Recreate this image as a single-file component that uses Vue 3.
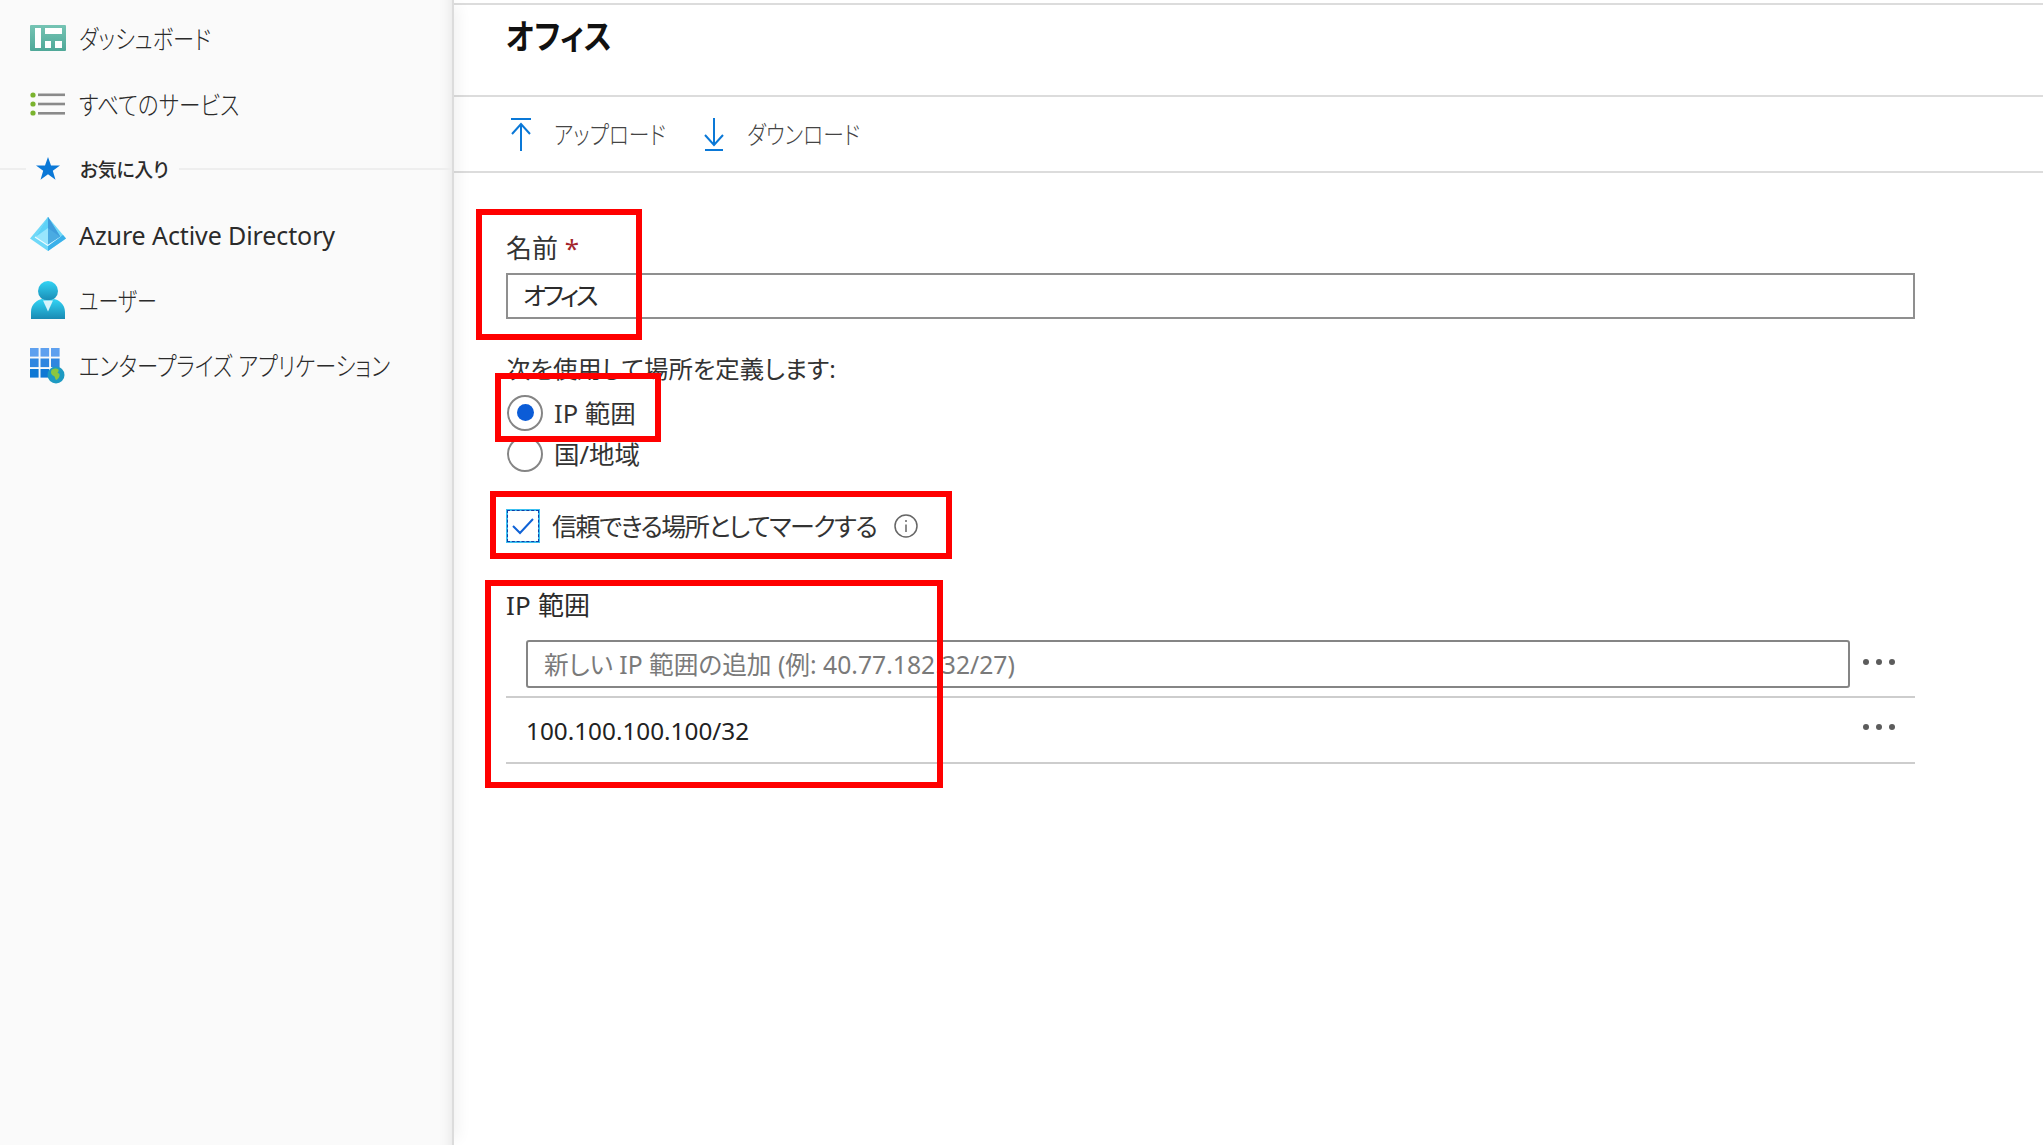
<script setup>
const navTop = [
  { key: 'dash', label: 'ダッシュボード' },
  { key: 'list', label: 'すべてのサービス' },
]
const navFav = [
  { key: 'aad', label: 'Azure Active Directory' },
  { key: 'user', label: 'ユーザー' },
  { key: 'apps', label: 'エンタープライズ アプリケーション' },
]
const marks = [
  { name: 'name', style: { left: '476px', top: '209px', width: '166px', height: '131px' } },
  { name: 'radio', style: { left: '495px', top: '373px', width: '166px', height: '69px' } },
  { name: 'trust', style: { left: '490px', top: '491px', width: '462px', height: '68px' } },
  { name: 'ip', style: { left: '485px', top: '580px', width: '458px', height: '208px' } },
]
</script>

<template>
  <div class="page">
    <aside class="sidebar">
      <a v-for="n in navTop" :key="n.key" class="nav">
        <span class="ico">
          <svg v-if="n.key === 'dash'" width="36" height="26" viewBox="0 0 36 26">
            <defs><linearGradient id="dg" x1="0" y1="0" x2="0" y2="1"><stop offset="0" stop-color="#76c4b4"/><stop offset="1" stop-color="#4fa898"/></linearGradient></defs>
            <rect width="36" height="26" rx="1" fill="url(#dg)"/>
            <rect x="5" y="3" width="6" height="20" fill="#fff"/>
            <rect x="15" y="3" width="17" height="6" fill="#fff"/>
            <rect x="15" y="16" width="6" height="7" fill="#fff"/>
            <rect x="25" y="16" width="7" height="7" fill="#fff"/>
          </svg>
          <svg v-else width="36" height="24" viewBox="0 0 36 24">
            <circle cx="3" cy="3" r="2.6" fill="#7ab32e"/><circle cx="3" cy="12" r="2.6" fill="#7ab32e"/><circle cx="3" cy="21" r="2.6" fill="#7ab32e"/>
            <rect x="8" y="1.5" width="27" height="2.6" fill="#8a8a8a"/><rect x="8" y="10.7" width="27" height="2.6" fill="#8a8a8a"/><rect x="8" y="20" width="27" height="2.6" fill="#8a8a8a"/>
          </svg>
        </span>
        <span :class="'t-' + n.key">{{ n.label }}</span>
      </a>

      <div class="fav">
        <i class="rule short"></i>
        <svg class="star" width="24" height="23" viewBox="0 0 24 23"><path d="M12 0l3 8.4h9l-7.2 5.4 2.7 8.9L12 17.3l-7.5 5.4 2.7-8.9L0 8.4h9z" fill="#0a78d7"/></svg>
        <span class="fav-text">お気に入り</span>
        <i class="rule"></i>
      </div>

      <a v-for="n in navFav" :key="n.key" class="nav">
        <span class="ico">
          <svg v-if="n.key === 'aad'" width="36" height="34" viewBox="0 0 36 34">
            <path d="M18 0L0 21.500 18 34l18-12.500z" fill="#6fd8f8"/>
            <path d="M18 0L5.500 20 18 27.500z" fill="#98e6fd"/>
            <path d="M18 0l12.500 20L18 27.500z" fill="#4aabe2"/>
            <path d="M18 0L5.500 20 18 11z" fill="#5fd2f7"/>
            <path d="M18 0l12.500 20L18 11z" fill="#3f9ddc"/>
            <path d="M5 20l13 8.500L31 20" fill="none" stroke="#eefbff" stroke-width="1.200"/>
            <path d="M18 34l18-12.500-3-3.500-15 11z" fill="#3ab0ea"/>
          </svg>
          <svg v-else-if="n.key === 'user'" width="34" height="38" viewBox="0 0 34 38">
            <defs>
              <linearGradient id="ug" x1="0" y1="0" x2="0" y2="1"><stop offset="0" stop-color="#32d4f5"/><stop offset="1" stop-color="#198ab3"/></linearGradient>
            </defs>
            <circle cx="17" cy="10" r="10" fill="url(#ug)"/>
            <path d="M0 38v-7c0-8 6-12 11-13 3 1.500 9 1.500 12 0 5 1 11 5 11 13v7z" fill="url(#ug)"/>
            <path d="M12 19.500h10l-5 11z" fill="#d8f3fb"/>
          </svg>
          <svg v-else width="36" height="36" viewBox="0 0 36 36">
            <g fill="#2f86e0">
              <rect x="0" y="0" width="8.600" height="8.600" fill="#5ea0ef"/><rect x="10.500" y="0" width="8.600" height="8.600" fill="#5ea0ef"/><rect x="21" y="0" width="8.600" height="8.600" fill="#5ea0ef"/>
              <rect x="0" y="10.500" width="8.600" height="8.600"/><rect x="10.500" y="10.500" width="8.600" height="8.600"/><rect x="21" y="10.500" width="8.600" height="8.600"/>
              <rect x="0" y="21" width="8.600" height="8.600" fill="#0f78d4"/><rect x="10.500" y="21" width="8.600" height="8.600" fill="#0f78d4"/><rect x="21" y="21" width="8.600" height="8.600" fill="#0f78d4"/>
            </g>
            <circle cx="26" cy="27" r="8.500" fill="#1d9ac2"/>
            <path d="M22 21.500c3-1.500 5-1 6.500 0 .5 1.500-.5 2.500-1 3.500 1.500 0 2.500 1 2 3-.5 2-2 3.500-3.500 4-1-1.500-1-3-2-4-1.500-.5-3-1.500-3-3.500 0-1.500.5-2.500 1-3z" fill="#8cc63f"/>
          </svg>
        </span>
        <span :class="'t-' + n.key">{{ n.label }}</span>
      </a>
    </aside>

    <main class="main">
      <header class="head"><h1>オフィス</h1></header>
      <div class="toolbar">
        <button class="tool up">
          <svg width="20" height="33" viewBox="0 0 20 33" fill="none" stroke="#0a78d7" stroke-width="2"><path d="M0 1h20M10 33V6M1 16l9-10 9 10"/></svg>
          <span>アップロード</span>
        </button>
        <button class="tool">
          <svg width="20" height="33" viewBox="0 0 20 33" fill="none" stroke="#0a78d7" stroke-width="2"><path d="M1 32h18M10 0v27M1 17l9 10 9-10"/></svg>
          <span>ダウンロード</span>
        </button>
      </div>

      <form class="form" @submit.prevent>
        <label class="label">名前 <b class="req">*</b></label>
        <input class="name" value="オフィス" />

        <p class="define">次を使用して場所を定義します:</p>
        <label class="radio on"><span class="dot"></span>IP 範囲</label>
        <label class="radio"><span class="dot"></span>国/地域</label>

        <div class="check">
          <span class="box">
            <svg width="24" height="18" viewBox="0 0 24 18" fill="none" stroke="#0f62d6" stroke-width="2"><path d="M2 9l7 7L22 2"/></svg>
          </span>
          <span class="check-text">信頼できる場所としてマークする</span>
          <svg class="info" width="24" height="24" viewBox="0 0 24 24" fill="none" stroke="#666" stroke-width="1.500"><circle cx="12" cy="12" r="11"/><path d="M12 10.500V18M12 6v2"/></svg>
        </div>

        <div class="ip-label">IP 範囲</div>
        <div class="ip-row add">
          <input class="ip-input" placeholder="新しい IP 範囲の追加 (例: 40.77.182.32/27)" />
          <span class="more"><i></i><i></i><i></i></span>
        </div>
        <div class="ip-row value">
          <span class="ip-value">100.100.100.100/32</span>
          <span class="more"><i></i><i></i><i></i></span>
        </div>
      </form>
    </main>

    <div v-for="m in marks" :key="m.name" class="mark" :style="m.style"></div>
  </div>
</template>

<style>
html, body { margin: 0; background: #fff; }
</style>

<style scoped>
.page {
  position: relative;
  display: flex;
  width: 2043px;
  height: 1145px;
  overflow: hidden;
  background: #fff;
  color: #2b2b2b;
  font-family: "Noto Sans", "Noto Sans CJK JP", sans-serif;
  font-size: 25px;
  font-feature-settings: "palt";
}
.sidebar {
  width: 454px;
  flex: none;
  box-sizing: border-box;
  padding-top: 5px;
  background: #fafafa;
  border-right: 2px solid #dcdcdc;
  box-shadow: inset -14px 0 14px -14px rgba(0,0,0,.1), 10px 0 14px -6px rgba(0,0,0,.06);
  position: relative;
  z-index: 1;
}
.nav {
  display: flex;
  align-items: center;
  height: 66px;
  padding-left: 30px;
  gap: 13px;
  font-size: 25px;
  color: #2b2b2b;
}
.t-dash, .t-list, .t-user, .t-apps {
  display: inline-block;
  font-size: 26px;
  font-weight: 300;
  white-space: nowrap;
  transform-origin: left center;
}
.t-dash { transform: scaleX(.817); margin-top: -1px; }
.t-list { transform: scaleX(.829); margin-top: -1px; }
.t-user { transform: scaleX(.77); }
.t-apps { transform: scaleX(.82); margin-top: -2px; }
.t-aad { letter-spacing: -.1px; margin-top: 2px; }
.ico { width: 36px; display: flex; align-items: center; justify-content: center; flex: none; }
.fav { display: flex; align-items: center; height: 64px; }
.rule { flex: 1; height: 2px; background: #eee; }
.rule.short { flex: none; width: 26px; }
.star { margin: -2px 0 0 10px; flex: none; }
.fav-text { margin: 0 11px 0 20px; font-size: 19px; font-weight: 500; letter-spacing: -.4px; color: #2b2b2b; }

.main { flex: 1; min-width: 0; display: flex; flex-direction: column; padding-top: 3px; }
.head { height: 90px; border-top: 2px solid #dcdcdc; border-bottom: 2px solid #dcdcdc; padding-left: 52px; }
h1 { margin: 0; font-size: 34px; font-weight: 700; line-height: 48px; padding-top: 7px; transform: scaleX(.875); transform-origin: left center; color: #111; }
.toolbar { height: 74px; border-bottom: 2px solid #dcdcdc; display: flex; align-items: center; padding-left: 57px; gap: 37px; }
.tool { display: flex; align-items: center; gap: 23px; padding: 0; border: 0; background: none; font: inherit; font-size: 25px; font-weight: 300; color: #444; }
.tool span { display: block; width: 113px; text-align: left; white-space: nowrap; margin-top: -2px; transform: scaleX(.83); transform-origin: left center; }

.form { padding: 56px 128px 0 52px; display: flex; flex-direction: column; align-items: stretch; }
.label { height: 44px; line-height: 38px; font-size: 26px; color: #333; }
.req { color: #a4262c; font-weight: 400; }
.name {
  height: 46px; box-sizing: border-box; margin: 0; padding: 0 16px 4px 15px;
  border: 2px solid #8f8f8f; outline: 0; border-radius: 0;
  font: inherit; font-size: 25px; font-weight: 400; letter-spacing: -3.200px; color: #2b2b2b; font-feature-settings: "palt";
}
.define { margin: 30px 0 0; height: 43px; line-height: 39px; font-size: 24.4px; color: #333; }
.radio { display: flex; align-items: center; height: 41px; box-sizing: border-box; padding-bottom: 2px; gap: 11px; font-size: 25.5px; margin-left: 1px; color: #333; }
.dot { width: 36px; height: 36px; margin-top: 2px; flex: none; box-sizing: border-box; border: 2px solid #858585; border-radius: 50%; display: flex; align-items: center; justify-content: center; background: #fff; }
.radio.on .dot::after { content: ""; width: 17px; height: 17px; border-radius: 50%; background: #0b5cd7; }
.check { display: flex; align-items: center; height: 46px; margin-top: 29px; font-size: 25px; color: #333; }
.box {
  width: 34px; height: 34px; box-sizing: border-box; display: flex; align-items: center; justify-content: center;
  border: 2px solid #3cc0f0; outline: 1px dashed #0f3fa8; outline-offset: -2px;
}
.check-text { margin-left: 12px; margin-top: -2px; letter-spacing: -1.500px; }
.info { margin-left: 18px; flex: none; }
.ip-label { margin-top: 34px; height: 57px; line-height: 44px; font-size: 26px; letter-spacing: .2px; color: #2b2b2b; }
.ip-row { display: flex; padding-left: 20px; border-bottom: 2px solid #cdcdcd; box-sizing: border-box; }
.ip-row.add { height: 58px; align-items: flex-start; }
.ip-row.value { height: 66px; align-items: center; }
.ip-input {
  width: 1324px; height: 48px; box-sizing: border-box; padding: 0 16px; margin: 0; flex: none;
  border: 2px solid #858585; border-radius: 3px; outline: 0;
  font: inherit; font-size: 24.7px; font-feature-settings: "palt"; background: #fff;
}
.ip-input::placeholder { color: #7a7a7a; opacity: 1; }
.ip-value { width: 1324px; flex: none; font-size: 24.3px; color: #222; }
.more { display: flex; gap: 7px; margin-left: 13px; align-self: flex-start; }
.ip-row.add .more { margin-top: 19px; }
.ip-row.value .more { margin-top: 26px; }
.more i { width: 6px; height: 6px; border-radius: 50%; background: #5c5c5c; }
.mark { position: absolute; box-sizing: border-box; border: 6px solid #ff0000; z-index: 5; pointer-events: none; }
</style>
